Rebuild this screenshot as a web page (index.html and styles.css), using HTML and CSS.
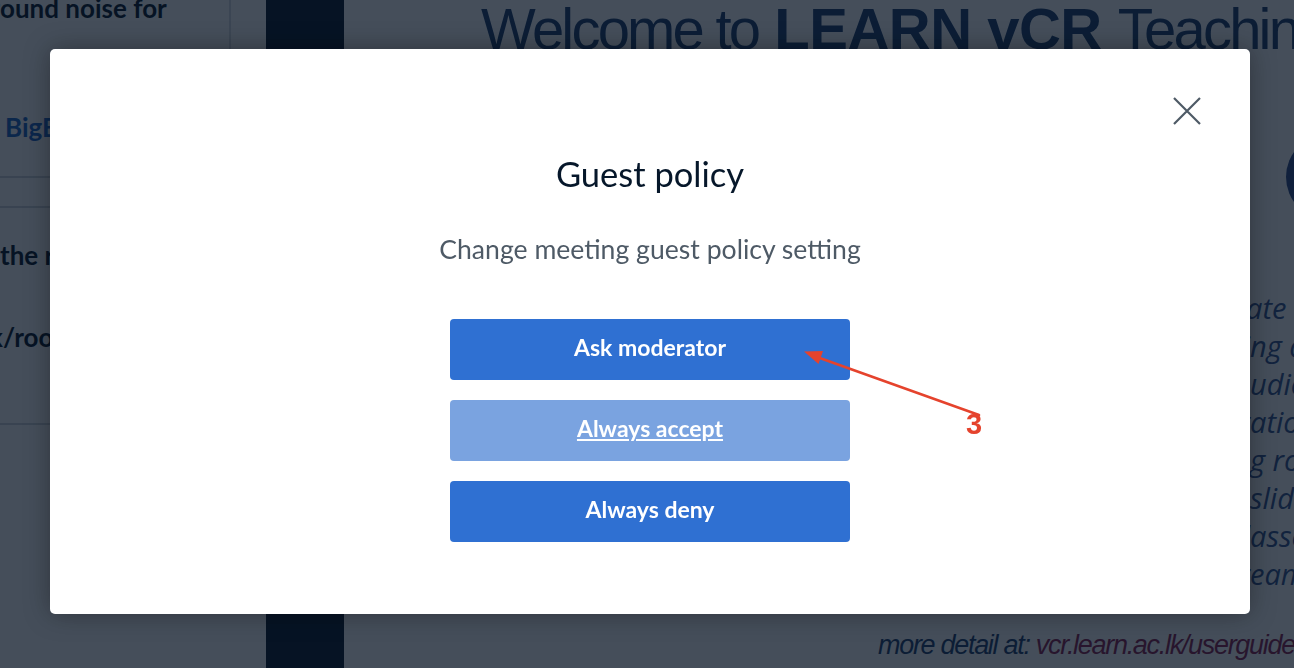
FILE: index.html
```html
<!DOCTYPE html>
<html lang="en">
<head>
<meta charset="utf-8">
<title>Guest policy</title>
<link rel="stylesheet" href="styles.css">
</head>
<body>
<div class="app">
  <aside class="sidebar">
    <p class="sb-text sb-top"><span class="sb-pre">Reduce backgr</span>ound noise for</p>
    <p class="sb-text sb-link">BigBlueButton</p>
    <div class="sb-rule sb-rule1"></div>
    <div class="sb-rule sb-rule2"></div>
    <p class="sb-text sb-mid">the room link</p>
    <p class="sb-text sb-url"><span class="sb-pre2">vcr.learn.ac.l</span>k/room</p>
    <div class="sb-rule sb-rule3"></div>
  </aside>
  <div class="gutter"></div>
  <div class="navcol"></div>
  <main class="slide">
    <h1 class="slide-title"><span class="thin">Welcome to</span> <b>LEARN vCR</b> <span class="thin">Teaching</span></h1>
    <div class="slide-logo"></div>
    <ul class="slide-list">
      <li><span class="pre">Coordin</span>ate with peers</li>
      <li><span class="pre">Live teachi</span>ng and learning</li>
      <li><span class="pre">Share a</span>udio and video</li>
      <li><span class="pre">Present</span>ations</li>
      <li><span class="pre">Breakout meetin</span>g rooms</li>
      <li><span class="pre">Share&nbsp;</span>slides</li>
      <li><span class="pre">Online cl</span>asses</li>
      <li><span class="pre">Live str</span>eaming</li>
    </ul>
    <p class="slide-foot">more detail at: <span class="slide-link">vcr.learn.ac.lk/userguide</span></p>
  </main>
</div>

<div class="overlay">
  <section class="modal" role="dialog" aria-label="Guest policy">
    <header class="modal-head">
      <button class="close" aria-label="Close">
        <svg viewBox="0 0 28 28" width="28" height="28"><path d="M1 1L27 27M27 1L1 27" stroke="#4e5a66" stroke-width="2.2" fill="none"/></svg>
      </button>
    </header>
    <h2 class="modal-title">Guest policy</h2>
    <p class="modal-desc">Change meeting guest policy setting</p>
    <div class="options">
      <button class="opt">Ask moderator</button>
      <button class="opt opt-current">Always accept</button>
      <button class="opt">Always deny</button>
    </div>
  </section>
</div>

<svg class="anno-arrow" viewBox="0 0 1294 668" width="1294" height="668">
  <line x1="817" y1="357" x2="979" y2="415" stroke="#e5432d" stroke-width="2.6" stroke-linecap="round"/>
  <polygon points="804,351.5 818.5,364 823,351" fill="#e5432d"/>
</svg>
<span class="anno-num">3</span>
</body>
</html>
```

FILE: styles.css
```css
* { box-sizing: border-box; }

html, body {
  margin: 0;
  padding: 0;
}

body {
  width: 1294px;
  height: 668px;
  overflow: hidden;
  background: #ffffff;
  font-family: Lato, "Open Sans", sans-serif;
  position: relative;
}

/* ---------- background application ---------- */
.app {
  display: grid;
  grid-template-columns: 231px 35px 78px 1fr;
  height: 668px;
}

.sidebar {
  align-self: start;
  height: 445px;
  border-right: 2px solid #d8dce1;
  background: #ffffff;
  overflow: hidden;
  display: flex;
  flex-direction: column;
}

.sb-text {
  margin: 0;
  font-size: 26px;
  line-height: 32px;
  font-weight: 700;
  color: #06172a;
  white-space: nowrap;
}

.sb-pre, .sb-pre2 {
  display: inline-block;
  text-align: right;
}
.sb-pre { width: 240px; }
.sb-pre2 { width: 240px; }

.sb-top { margin-top: -8px; margin-left: -240px; }
.sb-link { margin-top: 87px; margin-left: 5px; color: #1b63c4; }
.sb-mid { margin-top: 31px; margin-left: 0; }
.sb-url { margin-top: 50px; margin-left: -251px; }

.sb-rule {
  height: 2px;
  background: #cfd4da;
  flex-shrink: 0;
}
.sb-rule1 { margin-top: 33px; }
.sb-rule2 { margin-top: 28px; }
.sb-rule3 { margin-top: 70px; }

.gutter { background: #ffffff; }

.navcol { background: #06162a; }

.slide {
  background: #ffffff;
  overflow: hidden;
  display: flex;
  flex-direction: column;
  min-width: 0;
}

.slide-title {
  margin: 0;
  padding-left: 137px;
  font-family: "Liberation Sans", Arial, sans-serif;
  font-size: 58px;
  line-height: 58px;
  font-weight: 400;
  color: #1d3f6e;
  white-space: nowrap;
}
.slide-title .thin { letter-spacing: -2.8px; }
.slide-title b { font-weight: 700; letter-spacing: -0.5px; }

.slide-logo {
  flex-shrink: 0;
  width: 86px;
  height: 86px;
  margin: 76px 0 0 942px;
  border-radius: 50%;
  background: #2c4a86;
}

.slide-list {
  list-style: none;
  margin: 67px 0 0 0;
  padding: 0 0 0 656px;
  font-family: "Open Sans", sans-serif;
  font-style: italic;
  font-size: 29px;
  line-height: 38px;
  color: #34538e;
  white-space: nowrap;
}
.slide-list li:first-child { margin-top: 2px; margin-left: -4px; }
.slide-list .pre {
  display: inline-block;
  width: 250px;
  text-align: right;
}

.slide-foot {
  margin: auto 0 0 0;
  padding: 0 0 8px 534px;
  font-family: "Liberation Sans", Arial, sans-serif;
  font-style: italic;
  font-size: 27px;
  line-height: 30px;
  letter-spacing: -1.3px;
  color: #1d3f6e;
  white-space: nowrap;
}
.slide-link { color: #8a1f4e; }

/* ---------- modal ---------- */
.overlay {
  position: fixed;
  inset: 0;
  background: rgba(7, 19, 35, 0.75);
  display: flex;
  padding: 49px 44px 54px 50px;
}

.modal {
  flex: 1;
  background: #ffffff;
  border-radius: 5px;
  box-shadow: 0 0 26px rgba(0, 0, 0, 0.35);
  display: flex;
  flex-direction: column;
  align-items: center;
}

.modal-head {
  align-self: stretch;
  display: flex;
  justify-content: flex-end;
  padding: 48px 49px 0 0;
}

.close {
  width: 28px;
  height: 28px;
  padding: 0;
  border: 0;
  background: transparent;
  display: block;
}
.close svg { display: block; }

.modal-title {
  margin: 29px 0 0 0;
  font-size: 34.5px;
  line-height: 40px;
  font-weight: 400;
  color: #06172a;
}

.modal-desc {
  margin: 39px 0 0 0;
  font-size: 26.6px;
  line-height: 32px;
  color: #4e5a66;
}

.options {
  margin-top: 54px;
  display: flex;
  flex-direction: column;
  gap: 20px;
}

.opt {
  width: 400px;
  height: 61px;
  border: 0;
  border-radius: 4px;
  background: #2f70d2;
  color: #ffffff;
  font-family: Lato, "Open Sans", sans-serif;
  font-size: 23px;
  font-weight: 700;
  padding: 0 0 5px 0;
}

.opt-current {
  background: #7aa3e0;
  text-decoration: underline;
  text-decoration-thickness: 2px;
  text-underline-offset: 2px;
}

/* ---------- annotation ---------- */
.anno-arrow {
  position: absolute;
  left: 0;
  top: 0;
  pointer-events: none;
}

.anno-num {
  position: absolute;
  left: 966px;
  top: 407px;
  font-family: "Liberation Sans", Arial, sans-serif;
  font-weight: 700;
  font-size: 29px;
  line-height: 34px;
  color: #e5432d;
}
```
